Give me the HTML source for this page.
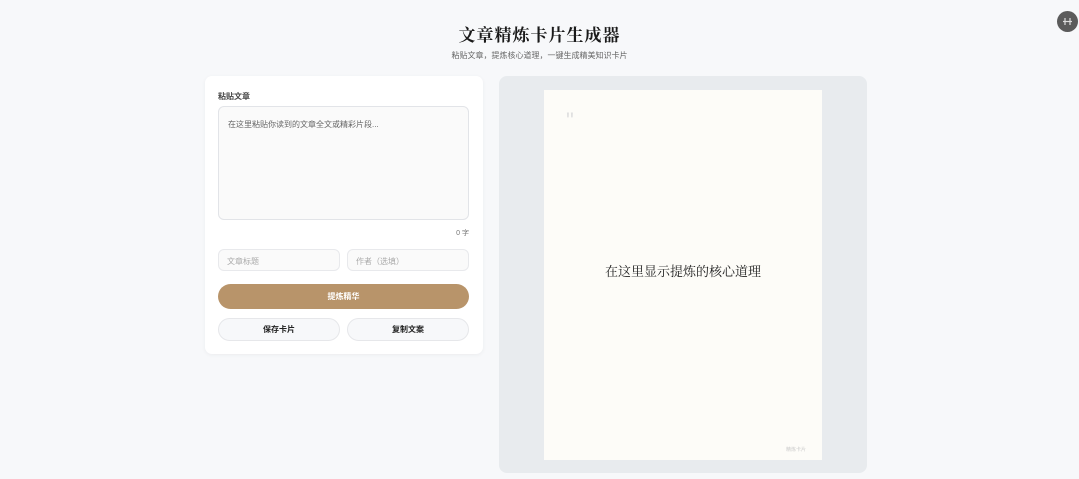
<!DOCTYPE html>
<html><head><meta charset="utf-8"><style>
*{margin:0;padding:0;box-sizing:border-box}
body{width:1079px;height:479px;background:#f7f8fa;font-family:"Liberation Sans","Noto Sans CJK SC",sans-serif;position:relative;overflow:hidden;color:#333}
.abs{position:absolute}
h1{position:absolute;left:0;width:1079px;top:21px;text-align:center;font:700 17px "Liberation Serif","Noto Serif CJK SC",serif;color:#1a1a1a;letter-spacing:1px}
.sub{top:50px;left:0;width:1079px;text-align:center;font-size:8px;color:#666}
.card{left:205px;top:76px;width:278px;height:278px;background:#fff;border-radius:7px;box-shadow:0 1px 4px rgba(0,0,0,.05)}
.lbl{left:218px;top:91px;font-size:8px;color:#444;font-weight:600}
.ta{left:218px;top:106px;width:251px;height:114px;border:1px solid #e2e4e8;border-radius:6px;background:#fafafa;padding:12px 9px;font-size:8px;color:#666}
.cnt{left:450px;top:228px;font-size:7px;color:#777;width:19px;text-align:right}
.in{top:249px;width:122px;height:22px;border:1px solid #e8e9ec;border-radius:6px;background:#fafafa;font-size:8px;color:#aaa;padding:6px 8px}
.btn{left:218px;top:284px;width:251px;height:25px;background:#b8946a;border-radius:13px;color:#fff;font-size:8px;font-weight:700;text-align:center;line-height:25px}
.b2{top:318px;width:122px;height:23px;border:1px solid #e6e7ea;border-radius:12px;background:#f7f8fa;font-size:8px;font-weight:700;text-align:center;line-height:21px;color:#222}
.panel{left:499px;top:76px;width:368px;height:397px;background:#e8ebee;border-radius:8px}
.pc{left:544px;top:90px;width:278px;height:370px;background:#fdfcf8}
.core{left:544px;width:278px;top:261px;text-align:center;font:13px "Liberation Serif","Noto Serif CJK SC",serif;color:#222}
.q{left:566px;top:108px;font:22px "Liberation Sans",sans-serif;color:#e0e0e0}
.ft{left:786px;top:446px;font-size:5px;color:#ccc}
.tog{left:1057px;top:11px;width:21px;height:21px;border-radius:50%;background:#5b5b5b}
</style></head><body>
<h1>文章精炼卡片生成器</h1>
<div class="abs sub">粘贴文章，提炼核心道理，一键生成精美知识卡片</div>
<div class="abs card"></div>
<div class="abs lbl">粘贴文章</div>
<div class="abs ta">在这里粘贴你读到的文章全文或精彩片段...</div>
<div class="abs cnt">0 字</div>
<div class="abs in" style="left:218px">文章标题</div>
<div class="abs in" style="left:347px">作者（选填）</div>
<div class="abs btn">提炼精华</div>
<div class="abs b2" style="left:218px">保存卡片</div>
<div class="abs b2" style="left:347px">复制文案</div>
<div class="abs panel"></div>
<div class="abs pc"></div>
<div class="abs q">"</div>
<div class="abs core">在这里显示提炼的核心道理</div>
<div class="abs ft">精炼卡片</div>
<div class="abs tog"><svg width="21" height="21"><g stroke="#ddd" stroke-width="1.2"><line x1="8" y1="7" x2="8" y2="14"/><line x1="13" y1="7" x2="13" y2="14"/><line x1="6" y1="10.5" x2="15" y2="10.5"/></g></svg></div>
</body></html>
